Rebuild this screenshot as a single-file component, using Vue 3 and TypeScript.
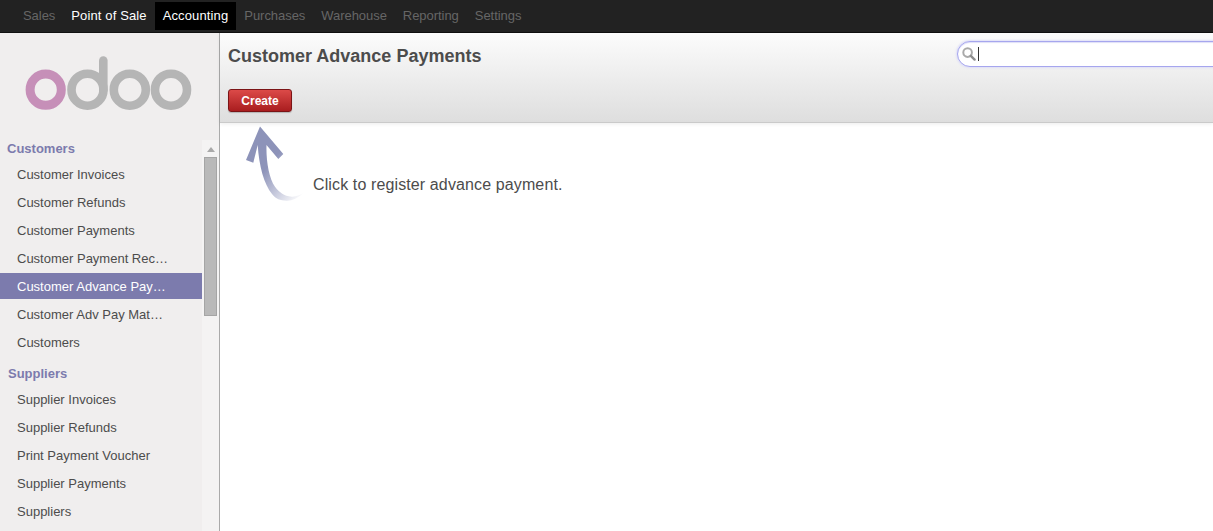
<script setup lang="ts">
const menus = [
  { label: 'Sales', tone: 'dim' },
  { label: 'Point of Sale', tone: 'bright' },
  { label: 'Accounting', tone: 'active' },
  { label: 'Purchases', tone: 'dim' },
  { label: 'Warehouse', tone: 'dim' },
  { label: 'Reporting', tone: 'dim' },
  { label: 'Settings', tone: 'dim' },
]
const customers = [
  'Customer Invoices',
  'Customer Refunds',
  'Customer Payments',
  'Customer Payment Reconciliation',
  'Customer Advance Payments',
  'Customer Adv Pay Matching',
  'Customers',
]
const suppliers = [
  'Supplier Invoices',
  'Supplier Refunds',
  'Print Payment Voucher',
  'Supplier Payments',
  'Suppliers',
]
</script>

<template>
  <div class="page">
    <nav class="topbar">
      <a v-for="m in menus" :key="m.label" class="menu" :class="m.tone">{{ m.label }}</a>
    </nav>
    <div class="body">
      <aside class="side">
        <div class="side-list">
          <div class="logo">
            <svg width="202" height="104" viewBox="0 0 202 104">
              <circle cx="45.7" cy="56.7" r="15.6" fill="none" stroke="#c68fb8" stroke-width="9" />
              <g fill="none" stroke="#b5b5b5" stroke-width="8.6">
                <circle cx="87.5" cy="56.7" r="16" />
                <path d="M103.3 57V27.5" stroke-linecap="round" />
                <circle cx="129.8" cy="56.7" r="16" />
                <circle cx="171" cy="56.7" r="16" />
              </g>
            </svg>
          </div>
          <h4 class="head">Customers</h4>
          <a
            v-for="c in customers"
            :key="c"
            class="row"
            :class="{ sel: c === 'Customer Advance Payments' }"
          >{{ c }}</a>
          <h4 class="head second">Suppliers</h4>
          <a v-for="s in suppliers" :key="s" class="row">{{ s }}</a>
        </div>
        <div class="scroll">
          <svg class="up" width="8" height="5" viewBox="0 0 8 5"><path d="M4 0l4 5H0z" fill="#a9a9a9" /></svg>
          <div class="thumb"></div>
        </div>
      </aside>
      <main class="main">
        <header class="head-panel">
          <div class="title-row">
            <h2 class="title">Customer Advance Payments</h2>
            <div class="search">
              <svg width="14" height="14" viewBox="0 0 14 14">
                <circle cx="5.6" cy="5.6" r="4.3" fill="none" stroke="#aaa" stroke-width="2" />
                <path d="M8.8 8.8l3.8 3.8" stroke="#8f8f8f" stroke-width="2.4" stroke-linecap="round" />
              </svg>
              <span class="caret"></span>
            </div>
          </div>
          <button class="create">Create</button>
        </header>
        <section class="help">
          <svg class="arrow" width="70" height="84" viewBox="0 0 70 84">
            <defs>
              <linearGradient id="shaft" gradientUnits="userSpaceOnUse" x1="20" y1="42" x2="56" y2="72">
                <stop offset="0" stop-color="#8d93b9" />
                <stop offset="1" stop-color="#ffffff" />
              </linearGradient>
            </defs>
            <path
              d="M14 0.5L37.3 28L32.3 33L20.5 19C20 35 23 52 29 60.7C33 66 38 70 45.7 70.7C50 71 54 69 57.3 67.3C52 72 46 75 40.7 74.7C34 74.5 30 73 26 68C18 58 13 40 11.7 19L7.3 36.7L0 34Z"
              fill="url(#shaft)"
            />
          </svg>
          <p class="help-text">Click to register advance payment.</p>
        </section>
      </main>
    </div>
  </div>
</template>

<style scoped>
.page {
  width: 1213px;
  height: 531px;
  overflow: hidden;
  display: flex;
  flex-direction: column;
  font-family: "Liberation Sans", Arial, sans-serif;
  background: #fff;
}
.topbar {
  height: 33px;
  flex: none;
  box-sizing: border-box;
  padding: 2px 0 2px 15px;
  display: flex;
  background: #222;
  border-bottom: 1px solid #111;
}
.menu {
  padding: 0 8px;
  height: 28px;
  line-height: 28px;
  font-size: 13px;
}
.dim { color: #666; letter-spacing: -0.05px; }
.bright { color: #fff; letter-spacing: 0.13px; }
.active { color: #fff; background: #000; letter-spacing: 0.13px; }
.body {
  flex: 1;
  min-height: 0;
  display: flex;
}
.side {
  width: 220px;
  flex: none;
  box-sizing: border-box;
  display: flex;
  background: #f0eeee;
  border-right: 1px solid #aaa;
  overflow: hidden;
}
.side-list {
  width: 202px;
  flex: none;
}
.logo { height: 104px; }
.logo svg { display: block; }
.head {
  margin: 0;
  height: 22px;
  line-height: 24px;
  padding-left: 7px;
  font-size: 13px;
  font-weight: bold;
  color: #7c7bad;
}
.head.second {
  margin-top: 7px;
  padding-left: 8px;
}
.row {
  display: block;
  height: 26px;
  line-height: 28px;
  margin: 2px 0;
  padding: 0 33px 0 17px;
  font-size: 13px;
  color: #4c4c4c;
  white-space: nowrap;
  overflow: hidden;
  text-overflow: ellipsis;
}
.row.sel {
  background: #7c7bad;
  color: #fff;
}
.scroll {
  width: 17px;
  flex: none;
  box-sizing: border-box;
  margin-top: 107px;
  padding-top: 7px;
  display: flex;
  flex-direction: column;
  align-items: center;
  background: #f4f3f3;
}
.up { display: block; flex: none; }
.thumb {
  width: 13px;
  height: 159px;
  flex: none;
  margin-top: 5px;
  box-sizing: border-box;
  background: #b9b9b9;
  border: 1px solid #a5a5a5;
}
.main {
  flex: 1;
  min-width: 0;
}
.head-panel {
  height: 90px;
  box-sizing: border-box;
  padding: 8px 0 0 8px;
  background: linear-gradient(#fcfcfc, #dedede);
  border-bottom: 1px solid #cacaca;
  box-shadow: 0 1px 4px rgba(0, 0, 0, 0.08);
}
.title-row {
  display: flex;
  justify-content: space-between;
  height: 48px;
}
.title {
  margin: 0;
  font-size: 18px;
  line-height: 30px;
  font-weight: bold;
  color: #4c4c4c;
}
.search {
  width: 290px;
  height: 26px;
  flex: none;
  margin-right: -34px;
  box-sizing: border-box;
  padding-left: 4px;
  display: flex;
  align-items: center;
  gap: 2px;
  background: #fff;
  border: 1px solid #a6a6ee;
  border-radius: 13px;
  box-shadow: inset 0 1px 1px #dfdff7, 0 0 2px 1px #dfdff7;
}
.search svg { display: block; flex: none; }
.caret {
  width: 1px;
  height: 14px;
  background: #333;
}
.create {
  display: block;
  width: 64px;
  height: 23px;
  box-sizing: border-box;
  padding: 0;
  font-family: inherit;
  font-size: 12px;
  font-weight: bold;
  color: #fff;
  background: linear-gradient(#dc4a48, #a91d1f);
  border: 1px solid #7b1416;
  border-radius: 3px;
  box-shadow: 0 1px 1px rgba(0, 0, 0, 0.2);
}
.help {
  display: flex;
  align-items: flex-start;
  padding: 3px 0 0 26px;
}
.arrow {
  display: block;
  flex: none;
}
.help-text {
  margin: 49px 0 0 -3px;
  font-size: 16px;
  line-height: 20px;
  letter-spacing: 0.12px;
  color: #4c4c4c;
}
</style>
